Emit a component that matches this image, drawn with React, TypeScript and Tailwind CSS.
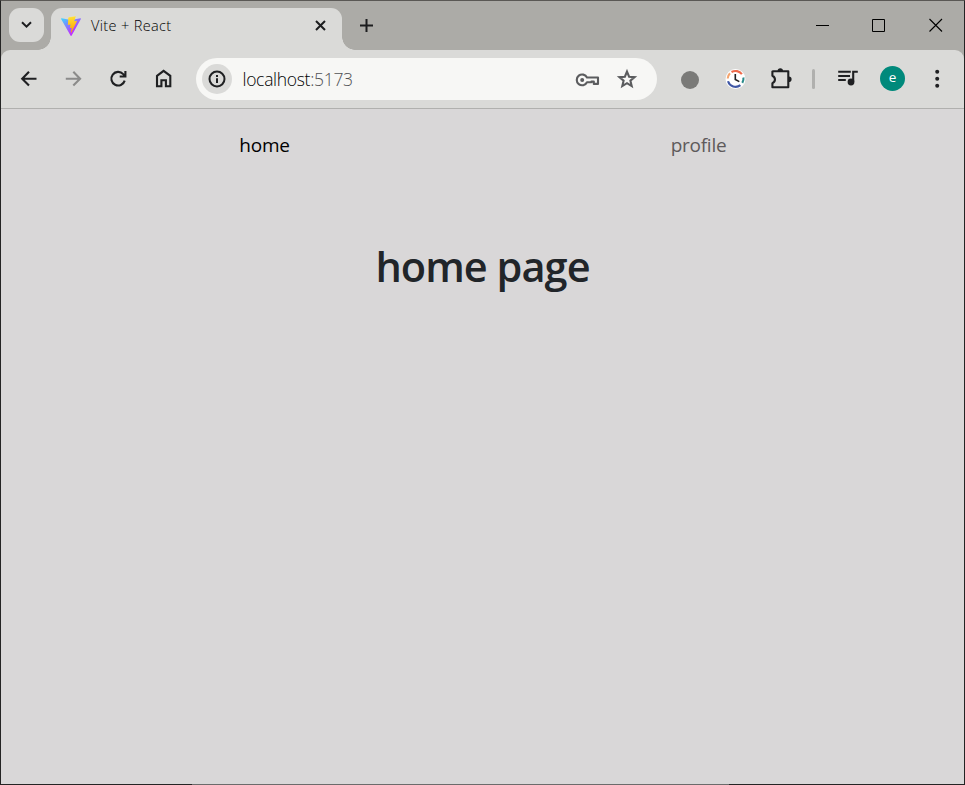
import type { ReactNode } from "react";

function ViteLogo() {
  return (
    <svg width="20" height="20" viewBox="0 0 256 257" className="shrink-0">
      <defs>
        <linearGradient id="viteBody" x1="0%" x2="57%" y1="8%" y2="79%">
          <stop offset="0%" stopColor="#41d1ff" />
          <stop offset="100%" stopColor="#bd34fe" />
        </linearGradient>
        <linearGradient id="viteBolt" x1="43%" x2="50%" y1="2%" y2="89%">
          <stop offset="0%" stopColor="#ffea83" />
          <stop offset="8%" stopColor="#ffdd35" />
          <stop offset="100%" stopColor="#ffa800" />
        </linearGradient>
      </defs>
      <path
        fill="url(#viteBody)"
        d="M255.153 37.938L134.897 252.976c-2.483 4.44-8.862 4.466-11.382.048L.875 37.958c-2.746-4.814 1.371-10.646 6.827-9.67l120.385 21.517a6.537 6.537 0 0 0 2.322-.004l117.867-21.483c5.438-.991 9.574 4.796 6.877 9.62Z"
      />
      <path
        fill="url(#viteBolt)"
        d="M185.432.063L96.44 17.501a3.268 3.268 0 0 0-2.634 3.014l-5.474 92.456a3.268 3.268 0 0 0 3.997 3.378l24.777-5.718c2.318-.535 4.413 1.507 3.936 3.838l-7.361 36.047c-.495 2.426 1.782 4.5 4.151 3.78l15.304-4.649c2.372-.72 4.652 1.36 4.15 3.788l-11.698 56.621c-.732 3.542 3.979 5.473 5.943 2.437l1.313-2.028l72.516-144.72c1.215-2.423-.88-5.186-3.54-4.672l-25.505 4.922c-2.396.462-4.435-1.77-3.759-4.114l16.646-57.705c.677-2.35-1.37-4.583-3.769-4.113Z"
      />
    </svg>
  );
}

function ToolButton({ children }: { children: ReactNode }) {
  return <button className="flex h-full w-[45px] shrink-0 items-center justify-center">{children}</button>;
}

function Glyph({ children, color = "#1f2022" }: { children: ReactNode; color?: string }) {
  return (
    <svg width="25" height="24" viewBox="0 0 25 24" fill="none" stroke={color} strokeWidth="2.1">
      {children}
    </svg>
  );
}

function TabStrip() {
  return (
    <div className="flex h-[49px] bg-[#acaba7] text-[#1c1d1f]">
      <button className="mt-[7px] ml-2 flex h-[34px] w-[35px] items-center justify-center rounded-[11px] bg-[#dadad8]">
        <svg width="11" height="8" viewBox="0 0 11 8" fill="none" stroke="currentColor" strokeWidth="2">
          <path d="M1 1.3 5.5 5.7 10 1.3" />
        </svg>
      </button>
      <div className="relative mt-[7px] ml-[7px] flex h-[42px] w-[291px] items-center rounded-t-[11px] bg-[#dadad8] pb-[7px] pl-[10px]">
        <span className="absolute bottom-0 -left-[13px] size-[13px] bg-[radial-gradient(circle_at_0_0,transparent_12.5px,#dadad8_13px)]" />
        <span className="absolute -right-[13px] bottom-0 size-[13px] bg-[radial-gradient(circle_at_100%_0,transparent_12.5px,#dadad8_13px)]" />
        <ViteLogo />
        <span className="ml-[10px] text-[14.5px] leading-5 font-light tracking-[0.35px] text-black">Vite + React</span>
        <svg
          width="11"
          height="11"
          viewBox="0 0 11 11"
          stroke="currentColor"
          strokeWidth="2"
          className="mr-[16px] ml-auto"
        >
          <path d="M1 1 10 10M10 1 1 10" />
        </svg>
      </div>
      <svg width="13" height="13" viewBox="0 0 13 13" stroke="currentColor" strokeWidth="2" className="mt-[18px] ml-[18px]">
        <path d="M6.5 0V13M0 6.5H13" />
      </svg>
      <div className="mt-[17px] mr-[21px] ml-auto flex gap-[43px]">
        <svg width="13" height="14" viewBox="0 0 13 14" stroke="#000">
          <path d="M0 7.5H13" />
        </svg>
        <svg width="13" height="14" viewBox="0 0 13 14" fill="none" stroke="#000">
          <path d="M.5 1.5H12.5V13.5H.5Z" />
        </svg>
        <svg width="14" height="14" viewBox="0 0 14 14" stroke="#000" strokeWidth="1.1" className="ml-px">
          <path d="M.5 1 13 13.5M13 1 .5 13.5" />
        </svg>
      </div>
    </div>
  );
}

function Toolbar() {
  return (
    <div className="bg-[#acaba7]">
      <div className="flex h-[59px] items-center rounded-t-[9px] border-b border-[#b0b0ae] bg-[#dadad8] pl-[5px]">
        <ToolButton>
          <Glyph>
            <path d="M20.5 11.7H6.5M13 4.8 6.2 11.7 13 18.6" />
          </Glyph>
        </ToolButton>
        <ToolButton>
          <Glyph color="#8b8b8a">
            <path d="M4.8 11.7H18.8M12.3 4.8 19.1 11.7 12.3 18.6" />
          </Glyph>
        </ToolButton>
        <ToolButton>
          <Glyph>
            <path d="M18.7 13.6A6.8 6.8 0 1 1 17.2 7.1L19 9M19.4 4V9.5H13.7" />
          </Glyph>
        </ToolButton>
        <ToolButton>
          <Glyph>
            <path d="M6 8.9 12.6 3.9 19.3 8.9V19.3H14.9V13.3H10.4V19.3H6Z" />
          </Glyph>
        </ToolButton>

        <div className="ml-[10px] flex h-[42px] w-[461px] items-center rounded-full bg-[#f7f7f5] pr-[18px] pl-[6px]">
          <span className="flex size-[30px] items-center justify-center rounded-full bg-[#dadad8]">
            <svg width="20" height="20" viewBox="0 0 20 20" fill="none" stroke="#1f2022" strokeWidth="2">
              <circle cx="10" cy="10" r="7.5" />
              <path d="M10 9.2V14M10 6V8" />
            </svg>
          </span>
          <span className="ml-[10.5px] text-[17.5px] leading-6 font-light tracking-[-0.3px] text-black">
            localhost<span className="text-[#505154]">:5173</span>
          </span>
          <svg
            width="25"
            height="16"
            viewBox="0 0 25 16"
            fill="none"
            stroke="#5b5c5e"
            strokeWidth="2.1"
            strokeLinejoin="round"
            className="mt-px ml-auto"
          >
            <path d="M12 5.5H23V11.9H18.8V9.6H16.4V10.3H12A5.4 5.4 0 1 1 12 5.5Z" />
            <circle cx="7.2" cy="7.9" r="2" fill="#5b5c5e" stroke="none" />
          </svg>
          <svg width="24" height="24" viewBox="0 0 24 24" fill="none" stroke="#5b5c5e" strokeWidth="2.1" className="ml-[15px]">
            <path d="M12 4.6 14.1 9.7 19.6 10.1 15.4 13.7 16.7 19.1 12 16.2 7.3 19.1 8.6 13.7 4.4 10.1 9.9 9.7Z" />
          </svg>
        </div>

        <div className="ml-[11px] flex h-full items-center">
          <ToolButton>
            <span className="mt-[2px] mr-px size-[18px] rounded-full bg-[#7a7a78]" />
          </ToolButton>
          <ToolButton>
            <Glyph>
              <circle cx="12.5" cy="12" r="10" fill="#fff" stroke="none" />
              <path stroke="#ee6a4b" d="M8.5 5A8 8 0 0 1 18.9 7.2" />
              <path stroke="#f4a46e" d="M4.7 11.5A8 8 0 0 1 7 6.3" />
              <path stroke="#2a8a8a" d="M20.4 10.5A8 8 0 0 1 19.3 15.9" />
              <path stroke="#3f57a5" d="M5 14.2A8 8 0 0 0 17.4 18.2" />
              <path strokeWidth="1.6" d="M12.3 7V12.5L16.3 14.6" />
            </Glyph>
          </ToolButton>
          <ToolButton>
            <Glyph>
              <path
                strokeLinejoin="round"
                d="M4.9 4.2H20.3V20.3H4.4V16.2C7.8 14.6 7.8 10.4 4.4 8.8V4.6Z"
              />
              <path fill="#1f2022" stroke="none" d="M9.6 4A2.7 2.7 0 0 1 15 4ZM20.8 9.5A2.8 2.8 0 0 1 20.8 15.1Z" />
            </Glyph>
          </ToolButton>
          <span className="ml-[9px] h-5 w-[2.5px] rounded-full bg-[#b0b0ae]" />
          <span className="w-[10.5px]" />
          <ToolButton>
            <Glyph>
              <path d="M3.2 4.8H15.8M3.2 9H15M3.2 13H10.8M18.2 14.8V4.8H22.8" />
              <circle cx="16" cy="15" r="3.4" fill="#1f2022" stroke="none" />
            </Glyph>
          </ToolButton>
          <ToolButton>
            <span className="mb-px flex size-[25px] items-center justify-center rounded-full bg-[#00897b] pb-[2px] text-[13.5px] leading-none font-medium text-white">
              e
            </span>
          </ToolButton>
          <ToolButton>
            <svg width="5" height="20" viewBox="0 0 5 20" fill="#1f2022">
              <circle cx="2.2" cy="2.8" r="2" />
              <circle cx="2.2" cy="9.8" r="2" />
              <circle cx="2.2" cy="16.8" r="2" />
            </svg>
          </ToolButton>
        </div>
      </div>
    </div>
  );
}

function HomePage() {
  return (
    <div className="flex-1 bg-[#d9d7d8]">
      <nav className="mx-auto grid w-[870px] grid-cols-2 pt-[21px] pr-[2px] text-center text-[19px] leading-[30px] tracking-[-0.25px]">
        <a className="text-black">home</a>
        <a className="text-[#5e5a5b]">profile</a>
      </nav>
      <h1 className="mt-[81px] text-center text-[41.5px] leading-[50px] font-semibold tracking-[-0.95px] text-[#212529]">
        home page
      </h1>
    </div>
  );
}

export default function App() {
  return (
    <div className="flex h-[785px] w-[965px] flex-col overflow-hidden border border-b-0 border-[#242424] border-t-[#5a5855] font-['Open_Sans','Noto_Sans',sans-serif]">
      <TabStrip />
      <Toolbar />
      <HomePage />
      <div className="flex h-px bg-[#242424] pl-[191px]">
        <span className="w-[537px] bg-[#6b6b6b]" />
      </div>
    </div>
  );
}
